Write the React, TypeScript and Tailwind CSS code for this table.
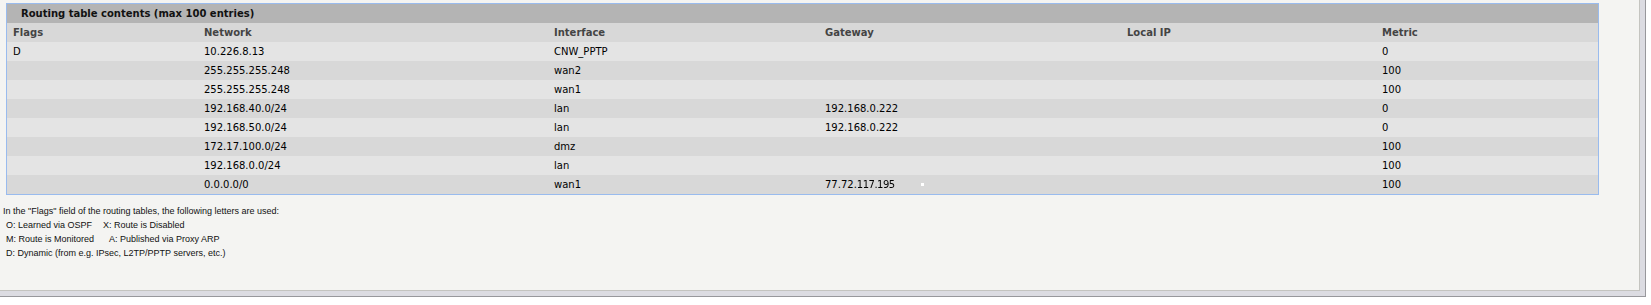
import React from "react";

const rows = [
  { f: "D", n: "10.226.8.13", i: "CNW_PPTP", g: "", l: "", m: "0" },
  { f: "", n: "255.255.255.248", i: "wan2", g: "", l: "", m: "100" },
  { f: "", n: "255.255.255.248", i: "wan1", g: "", l: "", m: "100" },
  { f: "", n: "192.168.40.0/24", i: "lan", g: "192.168.0.222", l: "", m: "0" },
  { f: "", n: "192.168.50.0/24", i: "lan", g: "192.168.0.222", l: "", m: "0" },
  { f: "", n: "172.17.100.0/24", i: "dmz", g: "", l: "", m: "100" },
  { f: "", n: "192.168.0.0/24", i: "lan", g: "", l: "", m: "100" },
  { f: "", n: "0.0.0.0/0", i: "wan1", g: "__masked__", l: "", m: "100" },
];

const grid = "grid grid-cols-[190px_350px_271px_302px_255px_223px] h-[19px] items-center";

function Gateway({ v }: { v: string }) {
  if (v === "__masked__") {
    return (
      <span className="inline-flex items-center">
        <span>77.72.</span>
        <span className="blur-[0.6px] tracking-[-0.5px]">117.195</span>
        <span className="ml-[26px] inline-block w-[3px] h-[3px] bg-white" />
      </span>
    );
  }
  return <span>{v}</span>;
}

export default function App() {
  return (
    <div className="w-[1651px] h-[305px] bg-white">
      <div className="w-[1646px] h-[297px] bg-[#dcdce2] border-r border-b border-[#98989c]">
        <div className="w-[1640px] h-[291px] bg-[#f4f4f2] border-r border-b border-[#c4c4c0] pt-[3px] pl-[6px]">
          <div
            className="w-[1593px] border border-[#99bbee] text-[10px] leading-[19px] text-black"
            style={{ fontFamily: '"DejaVu Sans", Verdana, sans-serif' }}
          >
            <div className="h-[19px] bg-[#b4b4b4] pl-[14px] font-bold text-[#111]">
              Routing table contents (max 100 entries)
            </div>
            <div className={`${grid} bg-[#d8d8d8] font-bold text-[#444]`}>
              <div className="pl-[6px]">Flags</div>
              <div className="pl-[7px]">Network</div>
              <div className="pl-[7px]">Interface</div>
              <div className="pl-[7px]">Gateway</div>
              <div className="pl-[7px]">Local IP</div>
              <div className="pl-[7px]">Metric</div>
            </div>
            {rows.map((r, idx) => (
              <div
                key={idx}
                className={`${grid} ${idx % 2 === 0 ? "bg-[#e4e4e4]" : "bg-[#d8d8d8]"}`}
              >
                <div className="pl-[6px]">{r.f}</div>
                <div className="pl-[7px]">{r.n}</div>
                <div className="pl-[7px]">{r.i}</div>
                <div className="pl-[7px]">
                  <Gateway v={r.g} />
                </div>
                <div className="pl-[7px]">{r.l}</div>
                <div className="pl-[7px]">{r.m}</div>
              </div>
            ))}
          </div>
          <div
            className="mt-[9px] -ml-[3px] text-[9px] leading-[14px] text-[#111]"
            style={{ fontFamily: '"Liberation Sans", Arial, sans-serif' }}
          >
            <div>In the "Flags" field of the routing tables, the following letters are used:</div>
            <div className="pl-[3px]">
              O: Learned via OSPF<span className="inline-block w-[11px]" />X: Route is Disabled
            </div>
            <div className="pl-[3px]">
              M: Route is Monitored<span className="inline-block w-[15px]" />A: Published via Proxy ARP
            </div>
            <div className="pl-[3px]">D: Dynamic (from e.g. IPsec, L2TP/PPTP servers, etc.)</div>
          </div>
        </div>
      </div>
    </div>
  );
}
